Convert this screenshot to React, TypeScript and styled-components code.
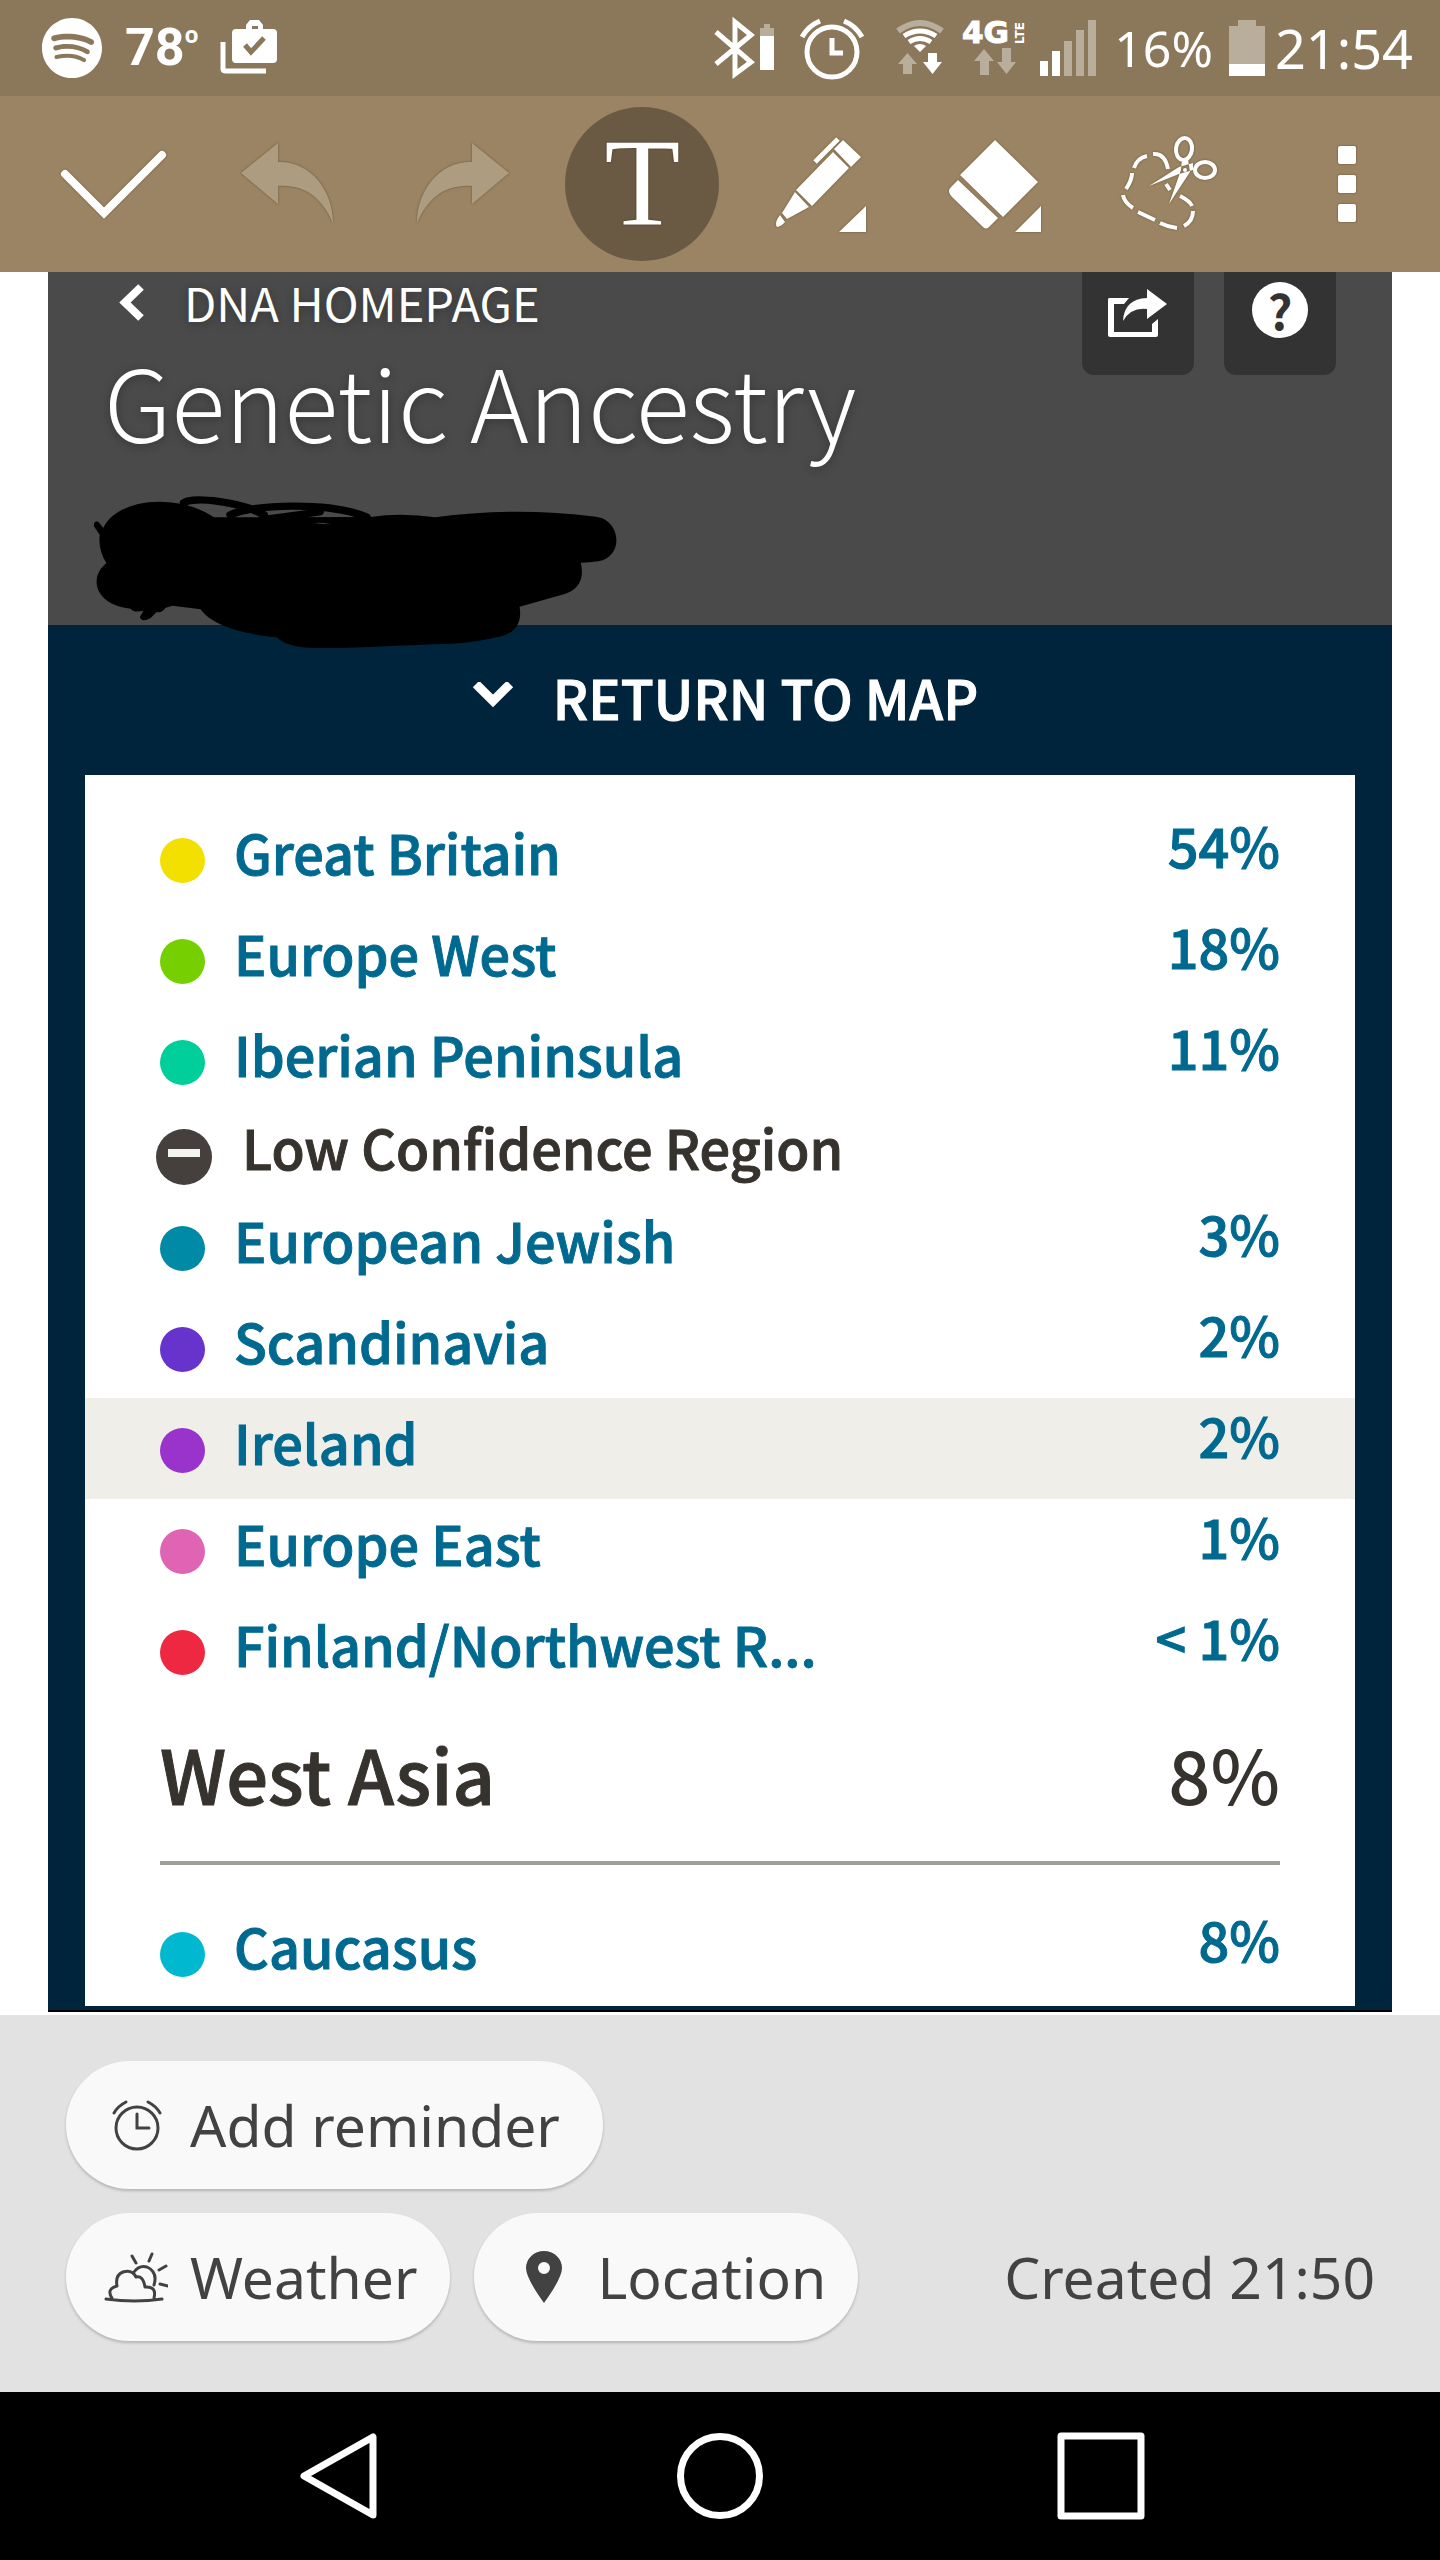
import React from "react";
import styled, { createGlobalStyle } from "styled-components";
import { FaSpotify } from "react-icons/fa";

const content = `"Noto Sans CJK SC", "Noto Sans CJK JP", "Noto Sans", sans-serif`;
const system = `"Noto Sans", "Open Sans", sans-serif`;

const colors = {
  status: "#8b785a",
  toolbar: "#9b8463",
  toolActive: "#6b5a43",
  faded: "#b9ae9c",
  header: "#4a4a4a",
  navy: "#00243c",
  link: "#00698f",
  ink: "#36322d",
  highlight: "#efeee9",
  footer: "#e2e2e2",
  pill: "#f9f9f9",
  label: "#424242",
};

const GlobalStyle = createGlobalStyle`
  *, *::before, *::after { box-sizing: border-box; }
  body { margin: 0; background: #fff; }
  button { border: 0; margin: 0; padding: 0; background: none; font: inherit; color: inherit; cursor: pointer; }
  a { color: inherit; text-decoration: none; }
  h1, h2, ul { margin: 0; padding: 0; font-weight: inherit; font-size: inherit; }
  ul { list-style: none; }
  svg { display: block; flex: none; }
`;

const Screen = styled.div`
  display: flex;
  flex-direction: column;
  min-height: 100vh;
  font-family: ${content};
`;

/* ---------- status bar ---------- */

const StatusBar = styled.header`
  display: flex;
  align-items: center;
  justify-content: space-between;
  height: 96px;
  padding: 0 27px 0 41px;
  background: ${colors.status};
  color: #fff;
  font-family: ${system};
`;

const StatusGroup = styled.div<{ $gap: number }>`
  display: flex;
  align-items: center;
  gap: ${(p) => p.$gap}px;
`;

const Temperature = styled.span`
  font-family: Roboto, sans-serif;
  font-weight: 700;
  font-size: 52px;
  line-height: 96px;
  sup {
    font-size: 24px;
    line-height: 24px;
    vertical-align: 22px;
  }
`;

const StatusText = styled.span<{ $size: number }>`
  font-size: ${(p) => p.$size}px;
  line-height: 96px;
  white-space: nowrap;
`;

/* ---------- toolbar ---------- */

const Toolbar = styled.nav`
  display: grid;
  grid-template-columns: repeat(8, 1fr);
  place-items: center;
  height: 176px;
  padding: 0 5px 0 26px;
  background: ${colors.toolbar};
  color: #fff;
`;

const Tool = styled.button<{ $active?: boolean }>`
  display: flex;
  align-items: center;
  justify-content: center;
  width: 154px;
  height: 154px;
  border-radius: 50%;
  background: ${(p) => (p.$active ? colors.toolActive : "transparent")};
  svg {
    filter: drop-shadow(0 0 1px rgba(60, 40, 10, 0.5));
  }
`;

const LetterTool = styled.span`
  font-family: "Liberation Serif", serif;
  font-size: 124px;
  line-height: 154px;
  text-shadow: 0 0 2px rgba(40, 25, 5, 0.6);
`;

/* ---------- document ---------- */

const Document = styled.main`
  flex: 1;
  margin: 0 48px 3px;
`;

const PageHeader = styled.section`
  position: relative;
  display: flex;
  justify-content: space-between;
  align-items: flex-start;
  min-height: 353px;
  padding: 0 56px 0 54px;
  background: ${colors.header};
  color: #fff;
  text-shadow: 0 2px 10px rgba(0, 0, 0, 0.3);
`;

const BackLink = styled.a`
  display: flex;
  align-items: center;
  gap: 40px;
  font-size: 47px;
  line-height: 60px;
`;

const Title = styled.h1`
  padding: 8px 0 0 2px;
  font-weight: 300;
  font-size: 100px;
  line-height: 120px;
`;

const HeaderActions = styled.div`
  display: flex;
  gap: 30px;
`;

const HeaderButton = styled.button`
  display: flex;
  justify-content: center;
  width: 112px;
  height: 103px;
  padding-top: 10px;
  border-radius: 0 0 12px 12px;
  background: #333;
`;

const HelpMark = styled.span`
  width: 56px;
  height: 56px;
  border-radius: 50%;
  background: #fff;
  color: #333;
  font-weight: 700;
  font-size: 48px;
  line-height: 54px;
  text-align: center;
  text-shadow: none;
`;

const Scribble = styled.svg`
  position: absolute;
  left: 41px;
  top: 221px;
  width: 536px;
  height: 160px;
`;

const Results = styled.section`
  padding: 0 37px 4px;
  border-bottom: 2px solid #000;
  background: ${colors.navy};
`;

const ReturnButton = styled.button`
  display: flex;
  align-items: center;
  justify-content: center;
  gap: 39px;
  width: 100%;
  padding: 0 0 6px 10px;
  color: #fff;
  font-weight: 500;
  font-size: 54px;
  line-height: 144px;
  -webkit-text-stroke: 1px currentColor;
`;

const Card = styled.div`
  padding: 33px 0 3px;
  background: #fff;
`;

const Region = styled.li<{ $selected?: boolean }>`
  display: flex;
  align-items: flex-start;
  height: 101px;
  padding: 0 75px;
  background: ${(p) => (p.$selected ? colors.highlight : "transparent")};
  color: ${colors.link};
  font-weight: 500;
  font-size: 54px;
  -webkit-text-stroke: 1px currentColor;
`;

const Dot = styled.span<{ $color: string }>`
  flex: none;
  width: 45px;
  height: 45px;
  margin: 30px 29px 0 0;
  border-radius: 50%;
  background: ${(p) => p.$color};
`;

const RegionName = styled.a`
  flex: 1;
  line-height: 88px;
`;

const Share = styled.span`
  line-height: 74px;
`;

const LowConfidence = styled.button`
  display: flex;
  align-items: flex-start;
  gap: 30px;
  height: 85px;
  padding: 0 71px;
  color: ${colors.ink};
  font-weight: 500;
  font-size: 54px;
  line-height: 72px;
  -webkit-text-stroke: 1px currentColor;
`;

const MinusBadge = styled.span`
  display: flex;
  justify-content: center;
  width: 56px;
  height: 56px;
  margin-top: 18px;
  padding-top: 20px;
  border-radius: 50%;
  background: #45403d;
  &::before {
    content: "";
    width: 32px;
    height: 8px;
    background: #f4f4ee;
  }
`;

const GroupHeading = styled.h2`
  display: flex;
  justify-content: space-between;
  margin: 0 75px 37px;
  padding-bottom: 16px;
  border-bottom: 4px solid #9f9e97;
  color: ${colors.ink};
  font-weight: 500;
  font-size: 74px;
  line-height: 144px;
`;

const GroupName = styled.span`
  -webkit-text-stroke: 1px currentColor;
`;

/* ---------- note footer ---------- */

const NoteFooter = styled.footer`
  display: flex;
  flex-direction: column;
  gap: 24px;
  padding: 46px 65px 51px 66px;
  background: ${colors.footer};
  color: ${colors.label};
  font-family: ${system};
  font-size: 57px;
`;

const FooterRow = styled.div`
  display: flex;
  align-items: center;
  gap: 24px;
`;

const Pill = styled.button<{ $end?: number }>`
  display: flex;
  align-items: center;
  gap: 22px;
  height: 128px;
  padding: 0 ${(p) => p.$end ?? 32}px 0 38px;
  border-radius: 64px;
  background: ${colors.pill};
  box-shadow: 0 2px 3px rgba(0, 0, 0, 0.2);
  line-height: 128px;
`;

const Created = styled.span`
  margin-left: auto;
`;

/* ---------- system navigation ---------- */

const SystemNav = styled.nav`
  display: grid;
  grid-template-columns: repeat(3, 1fr);
  place-items: center;
  height: 168px;
  padding: 0 148px;
  background: #000;
`;

const NavButton = styled.button`
  display: flex;
`;

/* ---------- data ---------- */

type RegionData = { name: string; share: string; color: string; selected?: boolean };

const mainRegions: RegionData[] = [
  { name: "Great Britain", share: "54%", color: "#f3e000" },
  { name: "Europe West", share: "18%", color: "#76cf00" },
  { name: "Iberian Peninsula", share: "11%", color: "#00cf9b" },
];

const lowRegions: RegionData[] = [
  { name: "European Jewish", share: "3%", color: "#008aa5" },
  { name: "Scandinavia", share: "2%", color: "#6633cc" },
  { name: "Ireland", share: "2%", color: "#9933cc", selected: true },
  { name: "Europe East", share: "1%", color: "#df65b4" },
  { name: "Finland/Northwest R...", share: "< 1%", color: "#ee2841" },
];

const asiaRegions: RegionData[] = [{ name: "Caucasus", share: "8%", color: "#00b9d0" }];

const RegionList = ({ regions }: { regions: RegionData[] }) => (
  <ul>
    {regions.map((r) => (
      <Region key={r.name} $selected={r.selected}>
        <Dot $color={r.color} />
        <RegionName href="#region">{r.name}</RegionName>
        <Share>{r.share}</Share>
      </Region>
    ))}
  </ul>
);

/* ---------- icons ---------- */

const Purchases = () => (
  <svg width="58" height="60" viewBox="219 20 58 60">
    <path fill="#fff" fillRule="evenodd" d="M245 31V27l4-5h9l4 5v4h10q4 0 4 4v26q0 4-4 4h-37q-4 0-4-4V35q0-4 4-4zM251 31h6v-3h-6z" />
    <path fill="none" stroke={colors.status} strokeWidth="5" d="M244 47l6 7 13-14" />
    <path fill="none" stroke="#fff" strokeWidth="5" d="M222 44v27q0 2 3 2h40" />
  </svg>
);

const Bluetooth = () => (
  <svg width="71" height="96" viewBox="716 0 71 96">
    <path fill="none" stroke="#fff" strokeWidth="5" d="M719 32l35 30-16 12V22l16 13-35 29" />
    <path fill={colors.faded} d="M767 24h6v4h4v8h-14v-8h4z" />
    <path fill="#fff" d="M763 36h14v34h-14z" />
  </svg>
);

const StatusAlarm = () => (
  <svg width="81" height="96" viewBox="797 0 81 96">
    <g fill="none" stroke="#fff" strokeWidth="5">
      <circle cx="835" cy="52" r="25" />
      <path d="M835 38v15h11" />
      <path d="M805 37Q811 26 823 21M865 37Q859 26 847 21" />
    </g>
  </svg>
);

const Wifi = () => (
  <svg width="66" height="96" viewBox="888 0 66 96">
    <g fill="none" strokeWidth="5">
      <path stroke={colors.faded} strokeWidth="6" d="M901 31Q923 15 945 31" />
      <path stroke="#fff" d="M907 36Q923 26 939 36M912 42Q923 35 934 42" />
    </g>
    <path fill="#fff" d="M917 46q6-4 12 0l-6 6z" />
    <path fill={colors.faded} d="M901 64l9.500-11 9.500 11h-5v10h-9v-10z" />
    <path fill="#fff" d="M926 62h5v-9h9v9h5l-9.500 12z" />
  </svg>
);

const Lte = () => (
  <svg width="68" height="96" viewBox="964 0 68 96" overflow="visible" fontFamily="DejaVu Sans, sans-serif" fontWeight="700">
    <text x="965" y="43" fontSize="31" fill="#fff" stroke="#fff">4G</text>
    <text transform="translate(1027 44) rotate(-90)" fontSize="12" fill="#fff">LTE</text>
    <path fill={colors.faded} d="M977 61l10-12 10 12h-5v14h-9v-14zM1000 62h5v-14h9v14h5l-9.500 12z" />
  </svg>
);

const Signal = () => (
  <svg width="65" height="96" viewBox="1042 0 65 96">
    <path fill="#fff" d="M1043 61h8v15h-8zM1055 51h8v25h-8z" />
    <path fill={colors.faded} d="M1067 41h8v35h-8zM1079 30h8v46h-8zM1091 20h8v56h-8z" />
  </svg>
);

const Battery = () => (
  <svg width="42" height="96" viewBox="1223 0 42 96">
    <path fill={colors.faded} d="M1238 20h18v6h9v38h-36V26h9z" />
    <path fill="#fff" d="M1229 64h36v12h-36z" />
  </svg>
);

const ToolIcon = ({ x, children }: { x: number; children: React.ReactNode }) => (
  <svg width="120" height="120" viewBox={`${x} 124 120 120`} fill="#fff">
    {children}
  </svg>
);

const UndoShape = () => <path fill="#ad9c80" d="M241 173l37-30v19C310 161 333 190 333 223C322 198 305 184 278 186v18z" />;

const Pen = () => (
  <ToolIcon x={758}>
    <path d="M842 140l18 17-10 10-17-18z" />
    <path fill="none" stroke="#fff" strokeWidth="5" d="M837 139l-23 23" />
    <path d="M832 152l16 16-37 38-16-16zM794 192l14 15-22 12-5-6zM779 215l5 7q-3 4-8 5-3-4 3-12z" />
    <path d="M865 206v26h-27z" />
  </ToolIcon>
);

const Eraser = () => (
  <ToolIcon x={934}>
    <path d="M994 140l43 42-35 35-43-42zM957 180l40 38-9 9q-3 3-6 0l-31-30q-6-6 0-11z" />
    <path d="M1040 206v26h-26z" />
  </ToolIcon>
);

const Lasso = () => (
  <ToolIcon x={1109}>
    <path
      fill="none"
      stroke="#fff"
      strokeWidth="4"
      d="M1132 168Q1135 158 1145 156M1151 154Q1163 153 1166 169M1164 184L1168 190M1178 196Q1188 201 1190 206M1191 211Q1191 221 1182 226M1175 228Q1166 227 1158 223M1153 220L1136 212M1131 208Q1122 202 1121 195M1124 189Q1130 180 1130 173"
    />
    <g fill="none" stroke="#fff" strokeWidth="4">
      <ellipse cx="1182" cy="149" rx="8" ry="11" transform="rotate(8 1182 149)" />
      <ellipse cx="1203" cy="170" rx="10" ry="8" />
    </g>
    <path fillRule="evenodd" d="M1180 159h6l2 13-21 32 12-34zM1147 186l30-19 14-4v7l-14 4zM1181 170a2 2 0 1 0 4 0 2 2 0 1 0-4 0z" />
  </ToolIcon>
);

const ShareIcon = () => (
  <svg width="60" height="50" viewBox="1108 287 60 50" fill="#fff">
    <path d="M1129 297h-20q-1 0-1 2v35q0 2 2 2h46q2 0 2-2v-16l-6 5v8h-38v-28h10z" />
    <path d="M1147 288l20 15-20 15v-10q-16-2-24 12 1-22 24-23z" />
  </svg>
);

const AlarmOutline = () => (
  <svg width="64" height="64" viewBox="106 2093 64 64" fill="none" stroke={colors.label} strokeWidth="3" strokeLinecap="round">
    <circle cx="139" cy="2128" r="21" />
    <path d="M139 2114v14h12" />
    <path d="M116 2113q4-7 12-11M162 2113q-4-7-12-11" />
  </svg>
);

const WeatherIcon = () => (
  <svg width="64" height="64" viewBox="104 2245 64 64" fill="none" stroke={colors.label} strokeWidth="3" strokeLinecap="round" strokeLinejoin="round">
    <path d="M112 2298q-6-9 5-12-2-11 6-14 9-3 13 5 7-2 9 10 12-1 9 11M106 2299q29 4 56 0" />
    <path d="M134 2272q5-7 13-5 11 5 7 18M132 2256l4 7M152 2254l-3 7M159 2270l7-4M160 2284l8 2" />
  </svg>
);

const PinIcon = () => (
  <svg width="64" height="64" viewBox="511 2246 64 64">
    <path fill={colors.label} fillRule="evenodd" d="M543 2304Q525 2279 525 2269a18 17 0 0 1 36 0Q561 2279 543 2304zM537 2269a6 6 0 1 0 12 0 6 6 0 1 0-12 0z" />
  </svg>
);

export default function App() {
  return (
    <Screen>
      <GlobalStyle />
      <StatusBar>
        <StatusGroup $gap={22}>
          <FaSpotify size={62} />
          <Temperature>
            78<sup>o</sup>
          </Temperature>
          <Purchases />
        </StatusGroup>
        <StatusGroup $gap={10}>
          <Bluetooth />
          <StatusAlarm />
          <Wifi />
          <Lte />
          <Signal />
          <StatusText $size={50}>16%</StatusText>
          <Battery />
          <StatusText $size={54}>21:54</StatusText>
        </StatusGroup>
      </StatusBar>

      <Toolbar aria-label="Editing tools">
        <Tool aria-label="Done">
          <ToolIcon x={54}>
            <path fill="none" stroke="#fff" strokeWidth="8" strokeLinecap="round" d="M65 174l39 39 58-58" />
          </ToolIcon>
        </Tool>
        <Tool aria-label="Undo">
          <ToolIcon x={230}>
            <UndoShape />
          </ToolIcon>
        </Tool>
        <Tool aria-label="Redo">
          <ToolIcon x={406}>
            <g transform="translate(750 0) scale(-1 1)">
              <UndoShape />
            </g>
          </ToolIcon>
        </Tool>
        <Tool aria-label="Text" $active>
          <LetterTool>T</LetterTool>
        </Tool>
        <Tool aria-label="Pen">
          <Pen />
        </Tool>
        <Tool aria-label="Eraser">
          <Eraser />
        </Tool>
        <Tool aria-label="Select and cut">
          <Lasso />
        </Tool>
        <Tool aria-label="More options">
          <ToolIcon x={1287}>
            <rect x="1338" y="146" width="18" height="18" rx="2" />
            <rect x="1338" y="175" width="18" height="18" rx="2" />
            <rect x="1338" y="204" width="18" height="18" rx="2" />
          </ToolIcon>
        </Tool>
      </Toolbar>

      <Document>
        <PageHeader>
          <div>
            <BackLink href="#dna">
              <svg width="42" height="60" viewBox="102 272 42 60">
                <path fill="none" stroke="#fff" strokeWidth="8" d="M141 287l-16 15.500 16 15.500" />
              </svg>
              DNA HOMEPAGE
            </BackLink>
            <Title>Genetic Ancestry</Title>
          </div>
          <HeaderActions>
            <HeaderButton aria-label="Share">
              <svg width="60" height="62" viewBox="0 -6 60 62">
                <ShareIcon />
              </svg>
            </HeaderButton>
            <HeaderButton aria-label="Help">
              <HelpMark>?</HelpMark>
            </HeaderButton>
          </HeaderActions>
          <Scribble viewBox="110 700 1200 480" preserveAspectRatio="none" aria-hidden="true">
            <path d="M142 805C160 750 220 724 270 726Q340 728 390 773L740 772Q810 758 885 773Q1060 740 1245 771C1300 780 1310 890 1250 905Q1230 909 1211 909C1220 960 1205 990 1175 1003L1074 1041C1080 1090 1065 1118 1035 1129Q970 1150 920 1152C800 1156 700 1168 600 1164Q550 1160 530 1133C440 1122 380 1090 360 1049L297 1038 282 1044Q270 1062 262 1056L248 1075Q228 1090 224 1072L232 1053Q210 1060 203 1047C120 1035 110 950 149 911Q130 870 134 825L121 800Q120 782 131 786Z" />
            <g fill="none" stroke="#000" strokeLinecap="round">
              <path strokeWidth="22" d="M324 729C340 710 450 725 500 765" />
              <path strokeWidth="22" d="M428 765C470 735 650 725 730 772" />
              <path strokeWidth="22" d="M500 780L625 757" />
            </g>
            <path fill={colors.header} d="M614 790Q635 788 652 794Q634 794 614 790Z" />
          </Scribble>
        </PageHeader>

        <Results>
          <ReturnButton>
            <svg width="42" height="30" viewBox="0 2 42 30">
              <path fill="none" stroke="#fff" strokeWidth="9" d="M4 4l17 17 17-17" />
            </svg>
            RETURN TO MAP
          </ReturnButton>
          <Card>
            <RegionList regions={mainRegions} />
            <LowConfidence>
              <MinusBadge />
              Low Confidence Region
            </LowConfidence>
            <RegionList regions={lowRegions} />
            <GroupHeading>
              <GroupName>West Asia</GroupName>
              <span>8%</span>
            </GroupHeading>
            <RegionList regions={asiaRegions} />
          </Card>
        </Results>
      </Document>

      <NoteFooter>
        <FooterRow>
          <Pill $end={43}>
            <AlarmOutline />
            Add reminder
          </Pill>
        </FooterRow>
        <FooterRow>
          <Pill>
            <WeatherIcon />
            Weather
          </Pill>
          <Pill>
            <PinIcon />
            Location
          </Pill>
          <Created>Created 21:50</Created>
        </FooterRow>
      </NoteFooter>

      <SystemNav aria-label="System">
        <NavButton aria-label="Back">
          <svg width="88" height="88" viewBox="0 0 88 88" fill="none" stroke="#fff" strokeWidth="7" strokeLinejoin="round">
            <path d="M78 5v78L9 44z" />
          </svg>
        </NavButton>
        <NavButton aria-label="Home">
          <svg width="88" height="88" viewBox="0 0 88 88" fill="none" stroke="#fff" strokeWidth="7">
            <circle cx="44" cy="44" r="39.500" />
          </svg>
        </NavButton>
        <NavButton aria-label="Recent apps">
          <svg width="88" height="88" viewBox="0 0 88 88" fill="none" stroke="#fff" strokeWidth="7" strokeLinejoin="round">
            <path d="M4 4h80v80H4z" />
          </svg>
        </NavButton>
      </SystemNav>
    </Screen>
  );
}
